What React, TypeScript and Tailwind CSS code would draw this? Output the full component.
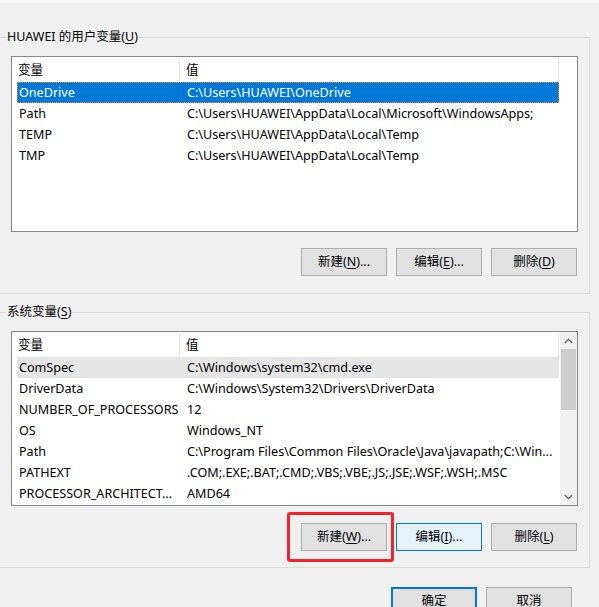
import React from 'react';

const font = { fontFamily: '"Noto Sans", "Noto Sans CJK SC", sans-serif' };

type Row = { name: string; value: string };

const userVars: Row[] = [
  { name: 'OneDrive', value: 'C:\\Users\\HUAWEI\\OneDrive' },
  { name: 'Path', value: 'C:\\Users\\HUAWEI\\AppData\\Local\\Microsoft\\WindowsApps;' },
  { name: 'TEMP', value: 'C:\\Users\\HUAWEI\\AppData\\Local\\Temp' },
  { name: 'TMP', value: 'C:\\Users\\HUAWEI\\AppData\\Local\\Temp' },
];

const sysVars: Row[] = [
  { name: 'ComSpec', value: 'C:\\Windows\\system32\\cmd.exe' },
  { name: 'DriverData', value: 'C:\\Windows\\System32\\Drivers\\DriverData' },
  { name: 'NUMBER_OF_PROCESSORS', value: '12' },
  { name: 'OS', value: 'Windows_NT' },
  { name: 'Path', value: 'C:\\Program Files\\Common Files\\Oracle\\Java\\javapath;C:\\Win...' },
  { name: 'PATHEXT', value: '.COM;.EXE;.BAT;.CMD;.VBS;.VBE;.JS;.JSE;.WSF;.WSH;.MSC' },
  { name: 'PROCESSOR_ARCHITECT...', value: 'AMD64' },
];

function Btn({
  label,
  hot,
  tail = '',
  variant = 'normal',
}: {
  label: string;
  hot: string;
  tail?: string;
  variant?: 'normal' | 'hover' | 'default';
}) {
  const cls =
    variant === 'hover'
      ? 'border border-[#0078d7] bg-[#e5f1fb]'
      : variant === 'default'
        ? 'border-2 border-[#0078d7] bg-[#e1e1e1]'
        : 'border border-[#adadad] bg-[#e1e1e1]';
  return (
    <button
      type="button"
      className={`flex h-[28px] w-[86px] items-center justify-center text-[12.5px] text-black ${cls}`}
    >
      {label}
      {hot && (
        <>
          (<span className="underline underline-offset-2">{hot}</span>)
        </>
      )}
      {tail}
    </button>
  );
}

function Header() {
  return (
    <div className="flex h-[25px] items-center bg-white pt-px">
      <div className="flex h-full w-[163px] items-center border-r border-[#e5e5e5] pl-[1px]">变量</div>
      <div className="flex h-full w-[379px] items-center border-r border-[#e5e5e5] pl-[6px]">值</div>
    </div>
  );
}

function ListRow({ row, state }: { row: Row; state?: 'selected' | 'hover' }) {
  const cls =
    state === 'selected'
      ? 'bg-[#0078d7] text-white outline outline-1 outline-dotted outline-[#ff8a1a] -outline-offset-1'
      : state === 'hover'
        ? 'bg-[#e5e5e5] text-black'
        : 'text-black';
  return (
    <div className={`flex h-[21px] w-[542px] items-center whitespace-nowrap pt-px ${cls}`}>
      <div className="w-[163px] overflow-hidden pl-[2px]">{row.name}</div>
      <div className="flex-1 overflow-hidden pl-[7px]">{row.value}</div>
    </div>
  );
}

function Chevron({ up }: { up?: boolean }) {
  return (
    <svg width="9" height="6" viewBox="0 0 9 6" className={up ? '' : 'rotate-180'}>
      <path d="M0.8 5 L4.5 1.3 L8.2 5" fill="none" stroke="#606060" strokeWidth="1.3" />
    </svg>
  );
}

function Legend({ text, hot }: { text: string; hot: string }) {
  return (
    <legend className="ml-[6px] px-[1px] text-[12.5px] leading-[18px] text-black">
      {text}(<span className="underline underline-offset-2">{hot}</span>)
    </legend>
  );
}

export default function App() {
  return (
    <div className="h-[607px] w-[599px] overflow-hidden bg-[#f0f0f0] text-[12.6px] text-black" style={font}>
      <div className="h-[3px] bg-[#f7f7f7]" />

      <fieldset className="-ml-[1px] mt-[25px] w-[591px] border border-[#dcdcdc] pb-[17px]">
        <Legend text="HUAWEI 的用户变量" hot="U" />
        <div className="ml-[11px] mt-[10px] h-[176px] w-[567px] border border-[#828790] bg-white pl-[5px]">
          <Header />
          {userVars.map((r, i) => (
            <ListRow key={r.name} row={r} state={i === 0 ? 'selected' : undefined} />
          ))}
        </div>
        <div className="mr-[12px] mt-[16px] flex justify-end gap-[9px]">
          <Btn label="新建" hot="N" tail="..." />
          <Btn label="编辑" hot="E" tail="..." />
          <Btn label="删除" hot="D" />
        </div>
      </fieldset>

      <fieldset className="-ml-[1px] mt-[9px] w-[591px] border border-[#dcdcdc] pb-[16px]">
        <Legend text="系统变量" hot="S" />
        <div className="ml-[11px] mt-[10px] flex h-[175px] w-[567px] border border-[#828790] bg-white">
          <div className="flex-1 overflow-hidden pl-[5px]">
            <Header />
            {sysVars.map((r, i) => (
              <ListRow key={r.name} row={r} state={i === 0 ? 'hover' : undefined} />
            ))}
          </div>
          <div className="flex w-[17px] flex-col bg-[#f0f0f0]">
            <div className="flex h-[17px] items-center justify-center">
              <Chevron up />
            </div>
            <div className="mx-[1px] h-[61px] bg-[#cdcdcd]" />
            <div className="flex-1" />
            <div className="flex h-[17px] items-center justify-center">
              <Chevron />
            </div>
          </div>
        </div>
        <div className="mr-[12px] mt-[17px] flex justify-end gap-[9px]">
          <div className="relative">
            <Btn label="新建" hot="W" tail="..." />
            <span className="pointer-events-none absolute -bottom-[11px] -left-[14px] -right-[7px] -top-[11px] rounded-[3px] border-[3px] border-[#f5222d]" />
          </div>
          <Btn label="编辑" hot="I" tail="..." variant="hover" />
          <Btn label="删除" hot="L" />
        </div>
      </fieldset>

      <div className="mr-[27px] mt-[19px] flex justify-end gap-[9px]">
        <Btn label="确定" hot="" variant="default" />
        <Btn label="取消" hot="" />
      </div>
    </div>
  );
}
